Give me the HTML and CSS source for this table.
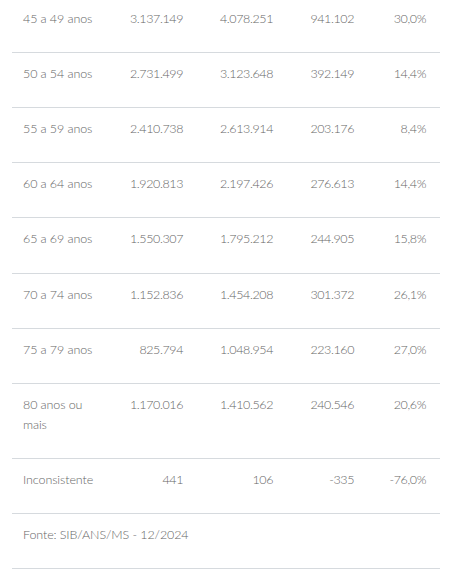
FILE: index.html
```html
<!doctype html>
<html lang="pt-BR">
<head>
	<meta charset="UTF-8">
	<meta name="viewport" content="width=device-width, initial-scale=1.0">
	<title>Beneficiários por faixa etária</title>
	<link rel="stylesheet" href="styles.css">
</head>
<body>
	<div class="tabela">
		<table>
			<colgroup>
				<col class="c-faixa">
				<col class="c-num">
				<col class="c-num2">
				<col class="c-num3">
				<col class="c-pct">
			</colgroup>
			<tbody>
				<tr class="primeira"><td>45 a 49 anos</td><td>3.137.149</td><td>4.078.251</td><td>941.102</td><td>30,0%</td></tr>
				<tr><td>50 a 54 anos</td><td>2.731.499</td><td>3.123.648</td><td>392.149</td><td>14,4%</td></tr>
				<tr><td>55 a 59 anos</td><td>2.410.738</td><td>2.613.914</td><td>203.176</td><td>8,4%</td></tr>
				<tr><td>60 a 64 anos</td><td>1.920.813</td><td>2.197.426</td><td>276.613</td><td>14,4%</td></tr>
				<tr><td>65 a 69 anos</td><td>1.550.307</td><td>1.795.212</td><td>244.905</td><td>15,8%</td></tr>
				<tr><td>70 a 74 anos</td><td>1.152.836</td><td>1.454.208</td><td>301.372</td><td>26,1%</td></tr>
				<tr><td>75 a 79 anos</td><td>825.794</td><td>1.048.954</td><td>223.160</td><td>27,0%</td></tr>
				<tr><td>80 anos ou mais</td><td>1.170.016</td><td>1.410.562</td><td>240.546</td><td>20,6%</td></tr>
				<tr><td>Inconsistente</td><td>441</td><td>106</td><td>-335</td><td>-76,0%</td></tr>
				<tr class="fonte"><td colspan="5">Fonte: SIB/ANS/MS - 12/2024</td></tr>
			</tbody>
		</table>
	</div>
</body>
</html>
```

FILE: styles.css
```css
* {
	margin: 0;
	padding: 0;
}
body {
	background: #fff;
	font-family: "Lato", "Open Sans", sans-serif;
	font-weight: 300;
	font-size: 12.5px;
	color: #666;
}

.tabela {
	padding: 0 9px 0 12px;
}
.tabela table {
	width: 428px;
	border-collapse: collapse;
	table-layout: fixed;
}
.c-faixa { width: 106px; }
.c-num { width: 76px; }
.c-num2 { width: 90px; }
.c-num3 { width: 81px; }
.c-pct { width: 75px; }

.tabela td {
	padding: 11px 11px 23.15px;
	line-height: 20px;
	text-align: right;
	vertical-align: top;
	border-bottom: 1px solid #d6dade;
	letter-spacing: -0.4px;
	white-space: nowrap;
}
.tabela td:first-child {
	text-align: left;
	letter-spacing: -0.1px;
	white-space: normal;
}
.tabela td:last-child {
	padding-right: 14px;
}
.tabela .primeira td {
	padding-top: 9px;
	padding-bottom: 23px;
}
.tabela .fonte td {
	text-align: left;
	letter-spacing: -0.1px;
}
```
